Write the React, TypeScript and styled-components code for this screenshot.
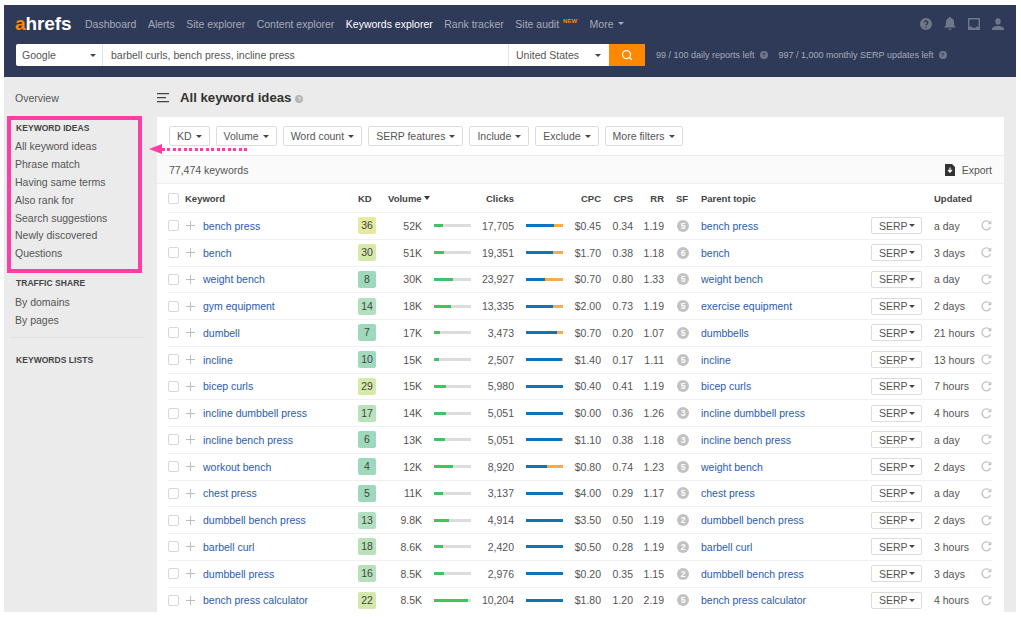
import * as React from "react";
import styled, { createGlobalStyle } from "styled-components";
import { Search } from "lucide-react";

const GlobalStyle = createGlobalStyle`
  html, body {
    margin: 0;
    padding: 0;
    height: 617px;
    overflow: hidden;
    background: #fff;
  }
  body {
    font-family: "Liberation Sans", Arial, sans-serif;
    font-size: 10.5px;
    color: #555;
  }
  * { box-sizing: border-box; }
`;

const keywords = [
  { kw: "bench press", kd: 36, kdc: "#e6e9a0", vol: "52K", vb: 25, clicks: "17,705", cb: 76, cpc: "$0.45", cps: "0.34", rr: "1.19", sf: 5, parent: "bench press", upd: "a day" },
  { kw: "bench", kd: 30, kdc: "#d6e9a8", vol: "51K", vb: 28, clicks: "19,351", cb: 72, cpc: "$1.70", cps: "0.38", rr: "1.18", sf: 6, parent: "bench", upd: "3 days" },
  { kw: "weight bench", kd: 8, kdc: "#9fd9bd", vol: "30K", vb: 52, clicks: "23,927", cb: 51, cpc: "$0.70", cps: "0.80", rr: "1.33", sf: 5, parent: "weight bench", upd: "a day" },
  { kw: "gym equipment", kd: 14, kdc: "#b2e0be", vol: "18K", vb: 47, clicks: "13,335", cb: 72, cpc: "$2.00", cps: "0.73", rr: "1.19", sf: 5, parent: "exercise equipment", upd: "2 days" },
  { kw: "dumbell", kd: 7, kdc: "#9fd9bd", vol: "17K", vb: 16, clicks: "3,473", cb: 84, cpc: "$0.70", cps: "0.20", rr: "1.07", sf: 5, parent: "dumbbells", upd: "21 hours" },
  { kw: "incline", kd: 10, kdc: "#a1dabd", vol: "15K", vb: 14, clicks: "2,507", cb: 97, cpc: "$1.40", cps: "0.17", rr: "1.11", sf: 5, parent: "incline", upd: "13 hours" },
  { kw: "bicep curls", kd: 29, kdc: "#d6e9a8", vol: "15K", vb: 33, clicks: "5,980", cb: 99, cpc: "$0.40", cps: "0.41", rr: "1.19", sf: 5, parent: "bicep curls", upd: "7 hours" },
  { kw: "incline dumbbell press", kd: 17, kdc: "#b8e2ba", vol: "14K", vb: 33, clicks: "5,051", cb: 100, cpc: "$0.00", cps: "0.36", rr: "1.26", sf: 3, parent: "incline dumbbell press", upd: "4 hours" },
  { kw: "incline bench press", kd: 6, kdc: "#9fd9bd", vol: "13K", vb: 30, clicks: "5,051", cb: 97, cpc: "$1.10", cps: "0.38", rr: "1.18", sf: 3, parent: "incline bench press", upd: "a day" },
  { kw: "workout bench", kd: 4, kdc: "#9fd9bd", vol: "12K", vb: 50, clicks: "8,920", cb: 57, cpc: "$0.80", cps: "0.74", rr: "1.23", sf: 5, parent: "weight bench", upd: "2 days" },
  { kw: "chest press", kd: 5, kdc: "#9fd9bd", vol: "11K", vb: 24, clicks: "3,137", cb: 99, cpc: "$4.00", cps: "0.29", rr: "1.17", sf: 5, parent: "chest press", upd: "a day" },
  { kw: "dumbbell bench press", kd: 13, kdc: "#b1e0bf", vol: "9.8K", vb: 41, clicks: "4,914", cb: 99, cpc: "$3.50", cps: "0.50", rr: "1.19", sf: 2, parent: "dumbbell bench press", upd: "2 days" },
  { kw: "barbell curl", kd: 18, kdc: "#b9e2b9", vol: "8.6K", vb: 25, clicks: "2,420", cb: 100, cpc: "$0.50", cps: "0.28", rr: "1.19", sf: 2, parent: "barbell curl", upd: "3 hours" },
  { kw: "dumbbell press", kd: 16, kdc: "#b5e1bb", vol: "8.5K", vb: 28, clicks: "2,976", cb: 100, cpc: "$0.20", cps: "0.35", rr: "1.15", sf: 2, parent: "dumbbell bench press", upd: "3 days" },
  { kw: "bench press calculator", kd: 22, kdc: "#d3e8a9", vol: "8.5K", vb: 91, clicks: "10,204", cb: 100, cpc: "$1.80", cps: "1.20", rr: "2.19", sf: 5, parent: "bench press calculator", upd: "4 hours" },
];

const navItems = ["Dashboard", "Alerts", "Site explorer", "Content explorer", "Keywords explorer", "Rank tracker"];
const filters = ["KD", "Volume", "Word count", "SERP features", "Include", "Exclude", "More filters"];
const ideaLinks = ["All keyword ideas", "Phrase match", "Having same terms", "Also rank for", "Search suggestions", "Newly discovered", "Questions"];

export default function App(): JSX.Element {
  return (
    <Frame>
      <GlobalStyle />
      <Header>
        <NavRow>
          <Logo><span>a</span>hrefs</Logo>
          {navItems.map((n) => (
            <NavLink key={n} $active={n === "Keywords explorer"}>{n}</NavLink>
          ))}
          <NavLink>Site audit<NewTag>NEW</NewTag></NavLink>
          <NavLink>More<NavCaret /></NavLink>
          <IconRow>
            <svg width="12" height="12" viewBox="0 0 12 12">
              <circle cx="6" cy="6" r="6" fill="#6f7789" />
              <path d="M4.2 4.6a1.8 1.7 0 1 1 2.7 1.5c-.6.4-.9.6-.9 1.2" fill="none" stroke="#2f3a59" strokeWidth="1.3" />
              <circle cx="6" cy="9.2" r=".8" fill="#2f3a59" />
            </svg>
            <svg width="12" height="13" viewBox="0 0 12 13">
              <path d="M6 0c.6 0 1 .4 1 1 2 .5 3 2 3 4v3l2 2.500H0L2 8V5c0-2 1-3.500 3-4 0-.6.400-1 1-1z" fill="#6f7789" />
              <path d="M4.500 11.500h3a1.500 1.500 0 0 1-3 0z" fill="#6f7789" />
            </svg>
            <svg width="12" height="12" viewBox="0 0 12 12">
              <path d="M.7.700h10.600v10.600H.7z" fill="none" stroke="#6f7789" strokeWidth="1.400" />
              <path d="M0 8.500h3.500l1 1.200h3l1-1.200H12V12H0z" fill="#6f7789" />
            </svg>
            <svg width="12" height="12" viewBox="0 0 12 12">
              <ellipse cx="6" cy="3.500" rx="2.700" ry="3.300" fill="#6f7789" />
              <path d="M0 10.500c1-2 3.500-2.500 6-2.500s5 .5 6 2.500V12H0z" fill="#6f7789" />
            </svg>
          </IconRow>
        </NavRow>
        <SearchRow>
          <SearchBar>
            <EngineSelect>Google<DarkCaret /></EngineSelect>
            <QueryInput>barbell curls, bench press, incline press</QueryInput>
            <CountrySelect>United States<DarkCaret /></CountrySelect>
            <SearchButton><Search size={12} strokeWidth={2.5} color="#fff" /></SearchButton>
          </SearchBar>
          <Quota>99 / 100 daily reports left<HeaderHint>?</HeaderHint></Quota>
          <Quota>997 / 1,000 monthly SERP updates left<HeaderHint>?</HeaderHint></Quota>
        </SearchRow>
      </Header>

      <Body>
        <Sidebar>
          <Overview>Overview</Overview>
          <HighlightBox>
            <SideHead>KEYWORD IDEAS</SideHead>
            {ideaLinks.map((l) => <SideLink key={l}>{l}</SideLink>)}
          </HighlightBox>
          <PlainSection>
            <SideHead>TRAFFIC SHARE</SideHead>
            <SideLink>By domains</SideLink>
            <SideLink>By pages</SideLink>
          </PlainSection>
          <SideDivider />
          <PlainSection>
            <SideHead>KEYWORDS LISTS</SideHead>
          </PlainSection>
        </Sidebar>

        <Main>
          <TitleRow>
            <svg width="12" height="10" viewBox="0 0 12 10">
              <path d="M0 .700h12M0 4.700h9M0 8.700h12" stroke="#444" strokeWidth="1.300" />
            </svg>
            <Title>All keyword ideas</Title>
            <TitleHint>?</TitleHint>
          </TitleRow>
          <Panel>
            <FilterRow>
              {filters.map((f) => <FilterButton key={f}>{f}<DarkCaret /></FilterButton>)}
            </FilterRow>
            <SummaryRow>
              <span>77,474 keywords</span>
              <ExportLink>
                <svg width="10" height="12" viewBox="0 0 10 12">
                  <path d="M0 0h7l3 3v9H0z" fill="#333" />
                  <path d="M5 3.500v4M3 6l2 2.200L7 6" fill="none" stroke="#fff" strokeWidth="1.200" />
                </svg>
                Export
              </ExportLink>
            </SummaryRow>
            <HeadRow>
              <Check />
              <KeywordHead>Keyword</KeywordHead>
              <span>KD</span>
              <VolumeHead>Volume<SortCaret /></VolumeHead>
              <span />
              <RightCell>Clicks</RightCell>
              <span />
              <RightCell>CPC</RightCell>
              <RightCell>CPS</RightCell>
              <RightCell>RR</RightCell>
              <SfHead>SF</SfHead>
              <span>Parent topic</span>
              <span />
              <span>Updated</span>
              <span />
            </HeadRow>
            {keywords.map((r) => (
              <Row key={r.kw}>
                <Check />
                <PlusIcon />
                <KeywordLink>{r.kw}</KeywordLink>
                <KdBadge $bg={r.kdc}>{r.kd}</KdBadge>
                <RightCell>{r.vol}</RightCell>
                <BarCell>
                  <VolumeTrack><VolumeFill style={{ width: `${r.vb}%` }} /></VolumeTrack>
                </BarCell>
                <RightCell>{r.clicks}</RightCell>
                <BarCell>
                  <ClicksTrack><ClicksFill style={{ width: `${r.cb}%` }} /></ClicksTrack>
                </BarCell>
                <RightCell>{r.cpc}</RightCell>
                <RightCell>{r.cps}</RightCell>
                <RightCell>{r.rr}</RightCell>
                <SfDot>{r.sf}</SfDot>
                <KeywordLink>{r.parent}</KeywordLink>
                <SerpButton>SERP<DarkCaret /></SerpButton>
                <span>{r.upd}</span>
                <svg width="11" height="11" viewBox="0 0 12 12">
                  <path d="M10.300 7.800A4.800 4.800 0 1 1 9.600 2.700" fill="none" stroke="#c4c4c4" strokeWidth="1.500" />
                  <path d="M11.300 .5v4.200H7.100z" fill="#c4c4c4" />
                </svg>
              </Row>
            ))}
          </Panel>
        </Main>
      </Body>

      <ArrowOverlay>
        <ArrowHead />
        <ArrowDots />
      </ArrowOverlay>
    </Frame>
  );
}

const Frame = styled.div`
  position: relative;
  margin: 5px 5px 0 4px;
  height: 607px;
  background: #ebebeb;
  display: flex;
  flex-direction: column;
`;

const Header = styled.header`
  height: 72px;
  flex: none;
  background: #2f3a59;
  padding: 0 12px;
`;

const NavRow = styled.nav`
  height: 37px;
  margin-bottom: 2px;
  display: flex;
  align-items: center;
  gap: 11.500px;
`;

const Logo = styled.div`
  width: 57px;
  margin-left: -1px;
  margin-right: 1.500px;
  font-size: 19px;
  font-weight: 700;
  letter-spacing: -0.1px;
  color: #fff;
  span { color: #ff8800; }
`;

const NavLink = styled.a<{ $active?: boolean }>`
  display: flex;
  align-items: center;
  white-space: nowrap;
  color: ${(p) => (p.$active ? "#fff" : "#a6abb8")};
`;

const NewTag = styled.sup`
  margin: -6px 1px 0 4px;
  font-size: 6px;
  font-weight: 700;
  color: #ff8800;
`;

const NavCaret = styled.i`
  margin-left: 4px;
  border: 3px solid transparent;
  border-top: 3.500px solid #a6abb8;
  border-bottom: 0;
`;

const IconRow = styled.div`
  margin-left: auto;
  display: flex;
  align-items: center;
  gap: 12px;
`;

const SearchRow = styled.div`
  height: 22px;
  display: flex;
  align-items: center;
`;

const SearchBar = styled.div`
  display: flex;
  width: 629px;
  height: 22px;
  margin-right: 11px;
  background: #fff;
  border-radius: 2px;
  color: #555;
`;

const EngineSelect = styled.div`
  width: 87px;
  padding: 0 6px;
  display: flex;
  align-items: center;
  justify-content: space-between;
  border-right: 1px solid #e3e3e3;
`;

const QueryInput = styled.div`
  flex: 1;
  padding-left: 8px;
  display: flex;
  align-items: center;
`;

const CountrySelect = styled.div`
  width: 101px;
  padding: 0 8px 0 7px;
  display: flex;
  align-items: center;
  justify-content: space-between;
  border-left: 1px solid #e3e3e3;
`;

const SearchButton = styled.div`
  width: 36px;
  background: #ff8800;
  border-radius: 0 2px 2px 0;
  display: flex;
  align-items: center;
  justify-content: center;
`;

const Quota = styled.div`
  margin-right: 11px;
  display: flex;
  align-items: center;
  font-size: 9px;
  color: #a6abb8;
`;

const HeaderHint = styled.i`
  width: 8px;
  height: 8px;
  margin-left: 5px;
  border-radius: 50%;
  background: #6f7789;
  color: #2f3a59;
  font-size: 6px;
  font-style: normal;
  font-weight: 700;
  line-height: 8px;
  text-align: center;
`;

const Body = styled.div`
  flex: 1;
  min-height: 0;
  display: flex;
`;

const Sidebar = styled.aside`
  width: 153px;
  flex: none;
  padding-left: 3px;
`;

const Overview = styled.div`
  height: 39px;
  padding: 3px 0 0 8px;
  display: flex;
  align-items: center;
  line-height: 1;
`;

const HighlightBox = styled.section`
  width: 135px;
  height: 157px;
  padding: 0 4px;
  border: 4px solid #ff3ea5;
`;

const SideHead = styled.div`
  height: 16px;
  margin-bottom: 1px;
  padding-left: 1px;
  display: flex;
  align-items: center;
  font-size: 8.500px;
  font-weight: 700;
  letter-spacing: 0.05px;
  color: #444;
`;

const PlainSection = styled.section`
  padding: 2px 0 0 8px;
  ${SideHead} { margin-bottom: 2px; }
`;

const SideLink = styled.div`
  height: 17.900px;
  display: flex;
  align-items: center;
`;

const SideDivider = styled.div`
  width: 135px;
  height: 1px;
  margin: 8px 0 12.500px 3px;
  background: #e0e0e4;
`;

const Main = styled.main`
  flex: 1;
  min-width: 0;
  padding-right: 12px;
`;

const TitleRow = styled.div`
  height: 40px;
  padding-top: 1px;
  display: flex;
  align-items: center;
`;

const Title = styled.h1`
  margin: 0 4px 0 11px;
  font-size: 13.200px;
  font-weight: 700;
  color: #333;
`;

const TitleHint = styled.i`
  width: 8px;
  height: 8px;
  margin-top: 2px;
  border-radius: 50%;
  background: #b5b5b5;
  color: #ebebeb;
  font-size: 6px;
  font-style: normal;
  font-weight: 700;
  line-height: 8px;
  text-align: center;
`;

const Panel = styled.section`
  height: 495px;
  background: #fff;
`;

const FilterRow = styled.div`
  height: 38px;
  padding: 0 11px 0 12px;
  display: flex;
  align-items: center;
  gap: 6px;
`;

const FilterButton = styled.button`
  height: 20px;
  padding: 0 7px;
  display: flex;
  align-items: center;
  gap: 4px;
  background: #fff;
  border: 1px solid #dcdcdc;
  border-radius: 2px;
  font: inherit;
  color: #555;
`;

const DarkCaret = styled.i`
  border: 3px solid transparent;
  border-top: 3.500px solid #444;
  border-bottom: 0;
`;

const SummaryRow = styled.div`
  height: 29px;
  padding: 0 12px;
  display: flex;
  align-items: center;
  justify-content: space-between;
  background: #fafafa;
  border-top: 1px solid #eee;
  border-bottom: 1px solid #eee;
`;

const ExportLink = styled.div`
  display: flex;
  align-items: center;
  gap: 7px;
`;

const columns = "18px 17px 155px 18px 46px 49px 43px 49px 38px 32px 31px 37px 170px 63px 47px 11px";

const HeadRow = styled.div`
  height: 28px;
  margin: 0 12px 0 11px;
  display: grid;
  grid-template-columns: ${columns};
  align-items: center;
  font-size: 9.500px;
  font-weight: 700;
  color: #444;
  white-space: nowrap;
`;

const KeywordHead = styled.span`
  grid-column: 2 / span 2;
  margin-left: -1px;
`;

const VolumeHead = styled.span`
  margin-left: 12px;
  display: flex;
  align-items: center;
  gap: 2px;
  white-space: nowrap;
`;

const SortCaret = styled.i`
  border: 3px solid transparent;
  border-top: 4px solid #333;
  border-bottom: 0;
`;

const SfHead = styled.span`
  padding-left: 12px;
`;

const Row = styled.div`
  height: 26.750px;
  margin: 0 12px 0 11px;
  display: grid;
  grid-template-columns: ${columns};
  align-items: center;
  border-top: 1px solid #f0f0f0;
  white-space: nowrap;
`;

const RightCell = styled.span`
  text-align: right;
`;

const Check = styled.i`
  width: 11px;
  height: 11px;
  background: #fff;
  border: 1px solid #d8d8d8;
  border-radius: 2px;
`;

const PlusIcon = styled.i`
  width: 9px;
  height: 9px;
  background:
    linear-gradient(#bdbdbd, #bdbdbd) center / 9px 1px no-repeat,
    linear-gradient(#bdbdbd, #bdbdbd) center / 1px 9px no-repeat;
`;

const KeywordLink = styled.a`
  color: #2a5bb0;
`;

const KdBadge = styled.span<{ $bg: string }>`
  height: 17px;
  line-height: 17px;
  border-radius: 2px;
  background: ${(p) => p.$bg};
  text-align: center;
  color: #444;
`;

const BarCell = styled.span`
  display: block;
  padding-left: 12px;
`;

const VolumeTrack = styled.div`
  height: 3px;
  background: #dcdcdc;
`;

const VolumeFill = styled.div`
  height: 100%;
  background: #3fc463;
`;

const ClicksTrack = styled.div`
  height: 3px;
  background: #ffa94d;
`;

const ClicksFill = styled.div`
  height: 100%;
  background: #0f74b8;
`;

const SfDot = styled.i`
  width: 12px;
  height: 12px;
  margin-left: 13px;
  border-radius: 50%;
  background: #c2c2c2;
  color: #fff;
  font-size: 8.500px;
  font-style: normal;
  font-weight: 700;
  line-height: 12px;
  text-align: center;
`;

const SerpButton = styled.button`
  width: 51px;
  height: 17px;
  padding: 0 6px 0 7px;
  display: flex;
  align-items: center;
  justify-content: space-between;
  background: #fff;
  border: 1px solid #dcdcdc;
  border-radius: 2px;
  font: inherit;
  color: #555;
`;

const ArrowOverlay = styled.div`
  position: absolute;
  left: 145px;
  top: 139px;
  display: flex;
  align-items: center;
`;

const ArrowHead = styled.i`
  border: 5.500px solid transparent;
  border-right: 13px solid #ff3ea5;
  border-left: 0;
`;

const ArrowDots = styled.i`
  width: 87px;
  height: 3px;
  background: repeating-linear-gradient(90deg, #ff3ea5 0 3px, transparent 3px 5.500px);
`;
